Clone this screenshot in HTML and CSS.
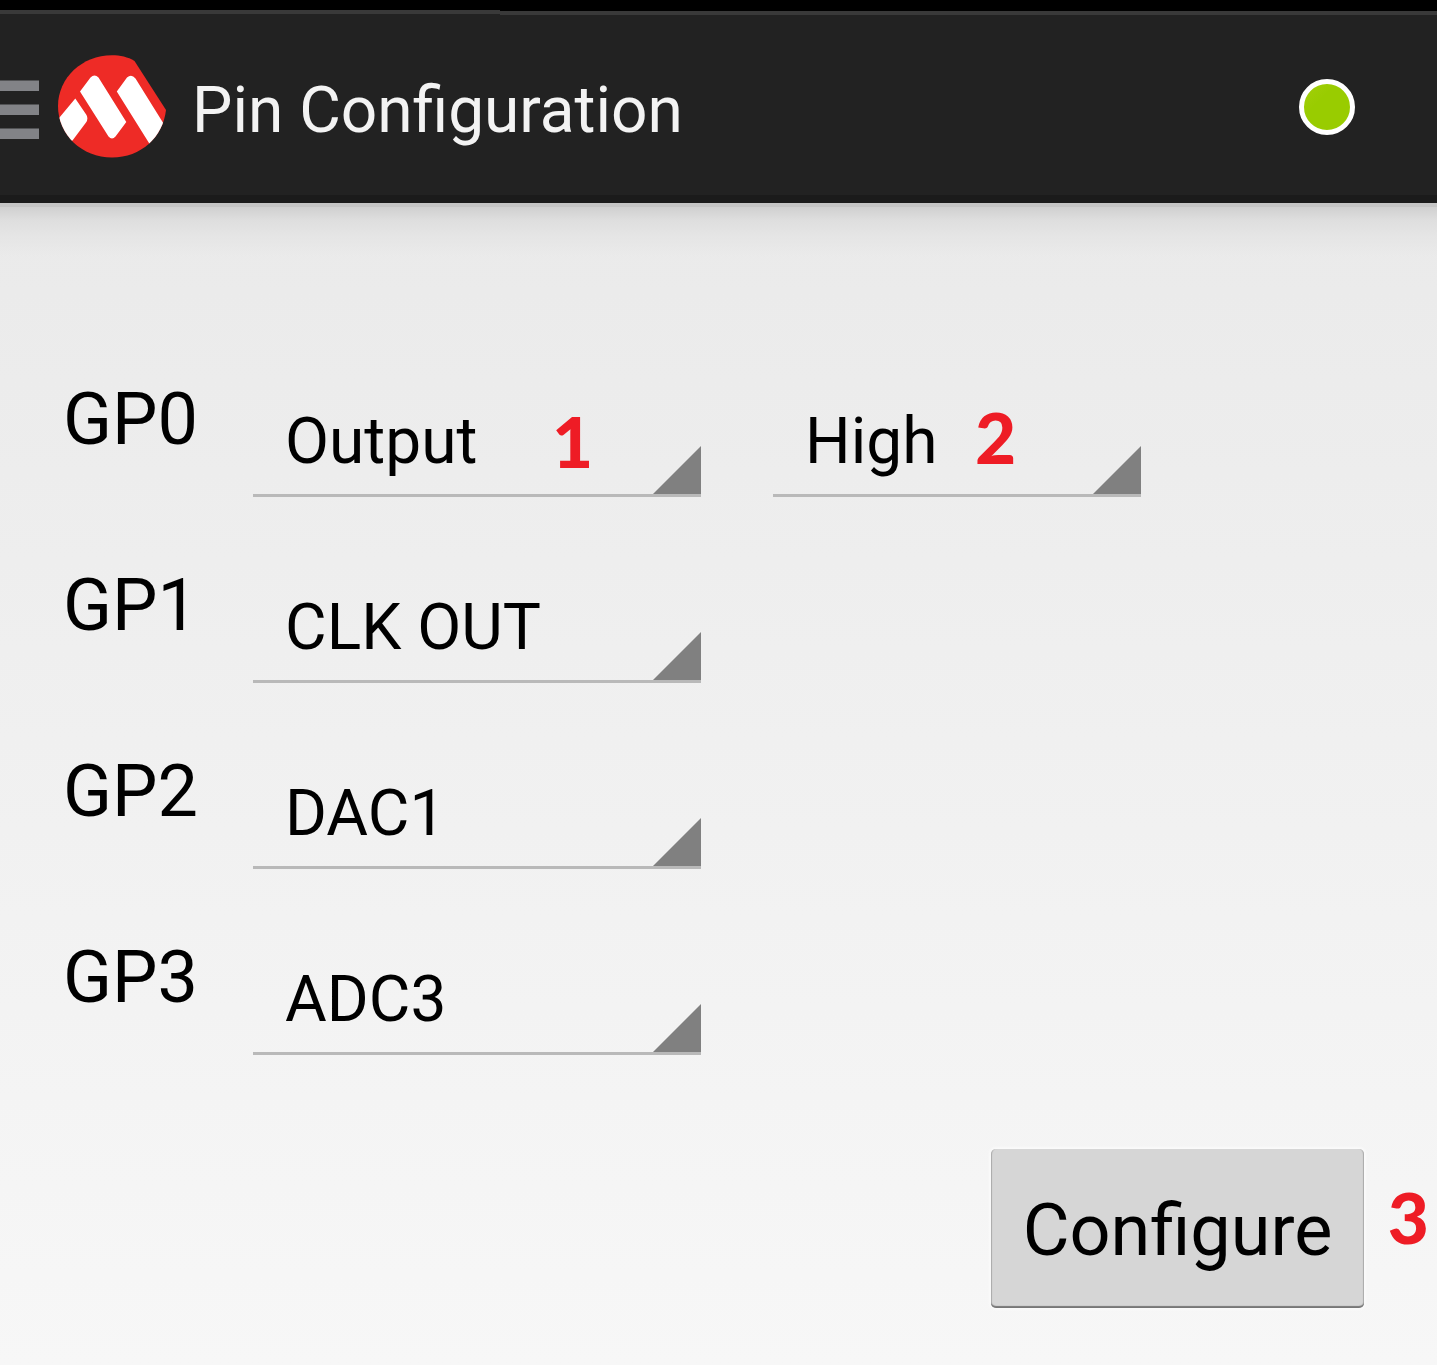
FILE: index.html
```html
<!DOCTYPE html>
<html lang="en">
<head>
<meta charset="utf-8">
<title>Pin Configuration</title>
<link rel="stylesheet" href="styles.css">
</head>
<body>
<div class="status-strip"><span class="strip-left"></span><span class="strip-right"></span></div>
<header class="action-bar">
  <svg class="menu" width="40" height="60" viewBox="0 0 40 60"><path d="M0 .5h39v10.500H0zM0 24.500h39v10.500H0zM0 48.500h39v10.500H0z" fill="#828387"/></svg>
  <svg class="logo" width="110" height="104" viewBox="57 54 110 104">
    <defs><clipPath id="disc"><path d="M134.500 61 L166 110 C163 137 141 157.500 112 157.500 C82 157.500 58 135 58 106 C58 78 82 55.300 112 55.300 C120 55.300 128 57 134.500 61Z"/></clipPath></defs>
    <g clip-path="url(#disc)">
      <path d="M57 54h110v104H57z" fill="#ee2b26"/>
      <path d="M75.300 98.500 L86.500 115 Q88.500 119 86 122.500 L72.500 140.500 L50 150 L50 129Z M80 91.500 L90.500 77.500 Q94.500 73.500 98.500 77.500 L126.300 122 L115.500 136.500 Q112 140.500 108.500 136.500Z M116.800 91.500 L127 77.500 Q131.500 73.500 135.500 78.500 L170 134 L160 160 L149 143Z" fill="#fff"/>
    </g>
  </svg>
  <h1 class="title">Pin Configuration</h1>
  <span class="led"></span>
</header>
<main class="content">
  <div class="pin-row">
    <span class="pin">GP0</span>
    <div class="spinner">Output<i class="corner"></i><b class="mark mark-one">1</b></div>
    <div class="spinner narrow">High<i class="corner"></i><b class="mark mark-two">2</b></div>
  </div>
  <div class="pin-row"><span class="pin">GP1</span><div class="spinner">CLK OUT<i class="corner"></i></div></div>
  <div class="pin-row"><span class="pin">GP2</span><div class="spinner">DAC1<i class="corner"></i></div></div>
  <div class="pin-row"><span class="pin">GP3</span><div class="spinner">ADC3<i class="corner"></i></div></div>
  <div class="actions"><button class="configure">Configure</button><b class="mark mark-three">3</b></div>
</main>
</body>
</html>
```
FILE: styles.css
```css
* { box-sizing: border-box; }
body {
  margin: 0;
  height: 1365px;
  overflow: hidden;
  display: flex;
  flex-direction: column;
  font-family: Roboto, sans-serif;
  color: #000;
  background: #222;
}
.status-strip { display: flex; height: 15px; flex: none; }
.strip-left { width: 500px; background: linear-gradient(#000 10px, #393939 10px, #393939 14px, #222 14px); }
.strip-right { flex: 1; background: linear-gradient(#000 11px, #393939 11px); }
.action-bar {
  height: 188px;
  flex: none;
  display: flex;
  align-items: flex-start;
  background: linear-gradient(#222 180px, #1b1b1b 180px);
}
.menu { margin-top: 65px; }
.logo { margin: 39px 0 0 17px; }
.title {
  margin: 58px 0 0 25px;
  font-size: 64px;
  font-weight: 400;
  line-height: 75px;
  letter-spacing: 0;
  color: #f3f3f3;
  white-space: nowrap;
}
.led {
  width: 56px;
  height: 56px;
  margin: 64px 82px 0 auto;
  border: 5px solid #fff;
  border-radius: 50%;
  background: linear-gradient(135deg, #a2cf0a, #99cc00 35%);
}
.content {
  flex: 1;
  position: relative;
  padding-top: 174px;
  background:
    linear-gradient(#c5c5c5 4px, #d0d0d0 4px, #dedede 17px, #e5e5e5 32px, rgba(235, 235, 235, 0) 54px) 0 0 / 100% 54px no-repeat,
    linear-gradient(#eaeaea, #f7f7f7);
}
.pin-row { display: flex; height: 186px; padding-left: 63px; }
.pin { width: 190px; padding-top: 1px; font-size: 72px; line-height: 84px; }
.spinner {
  position: relative;
  width: 448px;
  height: 120px;
  padding: 27px 0 0 32px;
  margin-right: 72px;
  border-bottom: 3px solid #b9b9b9;
  font-size: 64px;
  line-height: 75px;
  white-space: nowrap;
}
.narrow { width: 368px; }
.corner {
  position: absolute;
  right: 0;
  bottom: 0;
  width: 48px;
  height: 48px;
  background: #808080;
  clip-path: polygon(100% 0, 100% 100%, 0 100%);
}
.mark {
  position: absolute;
  font-family: Lato, sans-serif;
  font-weight: 900;
  font-size: 71px;
  line-height: 84px;
  color: #ee1c25;
}
.mark-one { left: 299px; top: 22px; }
.mark-two { left: 202px; top: 18px; }
.actions { position: relative; display: flex; justify-content: flex-end; padding: 28px 73px 0 0; }
.configure {
  width: 373px;
  height: 159px;
  padding: 5px 0 0;
  border: 0;
  border-radius: 5px;
  background: #d6d6d6;
  box-shadow: inset 0 -3px 1px -1px #777, inset 2px 0 1px -1px #aaa, inset -2px 0 1px -1px #aaa, 0 0 2px 2px #fafafa;
  font: 400 72px/84px Roboto, sans-serif;
  color: #000;
}
.mark-three { right: 8px; top: 54px; }
```
